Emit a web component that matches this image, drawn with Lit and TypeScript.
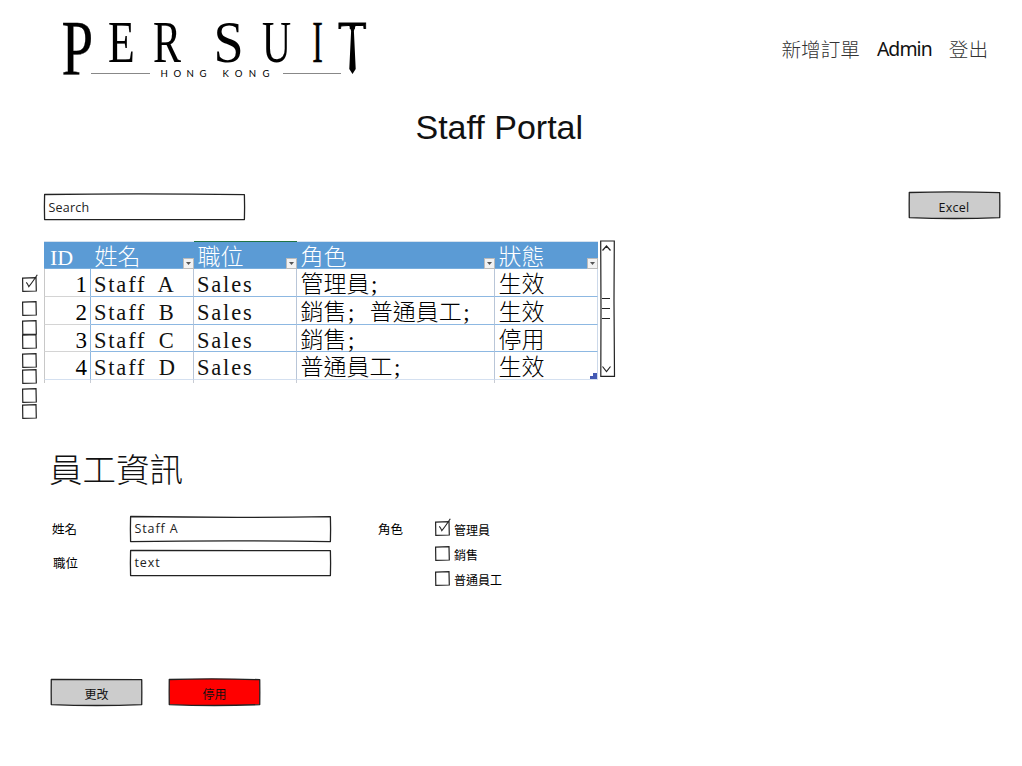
import { LitElement, html, svg, css, nothing } from "lit";
import { customElement, property } from "lit/decorators.js";

@customElement("sketch-box")
class SketchBox extends LitElement {
  @property() fill = "#fff";
  @property() shape = "top";
  static styles = css`
    :host { display: grid; grid-template-rows: minmax(0, 1fr); grid-template-columns: minmax(0, 1fr); }
    svg, .content { grid-area: 1 / 1; min-height: 0; }
    svg { display: block; width: 100%; height: 100%; overflow: visible; }
    .content { display: grid; align-items: center; z-index: 1; }
  `;
  render() {
    const top = this.shape === "top" || this.shape === "both" ? -1 : this.shape === "dip" ? 2 : 0.5;
    const bottom = this.shape === "both" || this.shape === "bottom" ? 27.4 : this.shape === "dip" ? 24.2 : 25.7;
    return html`
      <svg viewBox="0 0 100 26" preserveAspectRatio="none">
        <path d="M0.3 .5 Q50 ${top} 99.7 .7 L99.8 13 L99.7 25.6 Q50 ${bottom} .3 25.6 L.2 13 Z"
          fill=${this.fill} stroke="#222" stroke-width="1.3" stroke-linejoin="round" vector-effect="non-scaling-stroke"/>
      </svg>
      <div class="content"><slot></slot></div>`;
  }
}

@customElement("sketch-check")
class SketchCheck extends LitElement {
  @property({ type: Boolean }) checked = false;
  static styles = css`
    :host { display: block; width: 15px; height: 15px; }
    svg { display: block; overflow: visible; }
  `;
  render() {
    return html`<svg width="15" height="15" viewBox="0 0 15 15" fill="none" stroke="#222" stroke-width="1.2">
      <path d="M.6 1.2 L14 .7 L14.3 14 L.8 14.4 Z"/>
      ${this.checked ? svg`<path d="M4.3 5.3 Q5.8 7 6.8 9.6 Q9.5 6.5 15.3 -2.3" stroke-width="1.1"/>` : nothing}
    </svg>`;
  }
}

@customElement("app-root")
class AppRoot extends LitElement {
  static styles = css`
    :host {
      display: block; width: 1022px; height: 766px; overflow: hidden; background: #fff; color: #000;
      font-family: "Open Sans", "Noto Sans CJK TC", sans-serif;
    }
    * { box-sizing: border-box; }
    header { display: flex; justify-content: space-between; height: 94px; padding: 14px 34px 0 54px; }
    .logo { display: block; overflow: visible; }
    nav { display: flex; gap: 17px; padding-top: 20px; font-size: 19.6px; line-height: 30px; font-weight: 300; color: #333; font-family: "Noto Sans CJK TC", sans-serif; white-space: nowrap; }
    .user { font-family: "Noto Sans", sans-serif; font-weight: 400; color: #111; font-size: 19.4px; letter-spacing: -.9px; }
    h1 { margin: 0; padding-left: 415.5px; height: 100px; font: 400 34px/66px "Liberation Sans", sans-serif; color: #111; }
    .toolbar { display: flex; justify-content: space-between; padding: 0 22.5px 0 43.5px; height: 47px; }
    .field { width: 201px; height: 26px; font-size: 12.5px; color: #222; }
    .field span { padding-left: 5px; letter-spacing: .2px; }
    .button { width: 91px; height: 26px; text-align: center; font-size: 12.5px; color: #111; }
    .excel { margin-top: -2px; }
    .excel span { padding-top: 4px; letter-spacing: .3px; }
    .listing { display: flex; height: 205px; }
    .checks { display: grid; width: 44px; padding: 35.5px 0 0 21.5px; align-content: start; grid-template-rows: 24px 19px 14.5px 19px 16px 19px 15.5px 15px; }
    .table { display: grid; width: 554px; height: 142px; grid-template-columns: 47px 103px 103px 198px 103px; grid-template-rows: 28px 28px 28px 27px 28px 3px;
      font-family: "Liberation Serif", "Noto Sans CJK TC", serif; font-size: 23px; font-weight: 300; line-height: 32px; white-space: nowrap; }
    .th { display: flex; justify-content: space-between; line-height: 31px; background: #5b9bd5; color: #fff; padding-left: 3.5px; border-bottom: 1px solid #7aaedd; border-top: 1px solid #d6e2ee; }
    .th.picked { border-top-color: #217346; }
    .th.key { padding-left: 6px; }
    .th.key span { font-size: 22px; }
    .th i { width: 11px; height: 11px; margin-top: 16px; background: #f2f2f2; border: 1px solid #bbb; display: grid; place-items: center; }
    .th svg { display: block; }
    .td { border-right: 1px solid #b9c6d8; border-bottom: 1px solid #8db8e2; padding-left: 3.5px; }
    .half { display: inline-block; width: 11.6px; padding-left: 1.5px; }
    .latin { letter-spacing: 1.8px; word-spacing: 5px; padding-left: 3px; font-size: 22.5px; color: #111; }
    .id { text-align: right; padding-right: 3px; border-left: 1px solid #c8c8c8; border-bottom-color: #d4d4d4; border-right-color: #8db8e2; }
    .status { border-right-color: #ccd9ea; }
    .last { border-bottom-color: #d4e0f0; }
    .status.last { display: flex; justify-content: space-between; }
    .status.last svg { align-self: end; }
    .tail { border-right: 1px solid #c8ccd4; }
    .tail.first { border-left: 1px solid #c8c8c8; }
    .tail.end { border-right: 0; }
    .bar { display: block; margin-left: 2px; margin-top: -1px; }
    h2 { margin: 0; padding-left: 49px; height: 70px; font: 300 33.5px/44px "Noto Sans CJK TC", sans-serif; color: #111; }
    .form { display: flex; height: 163px; padding-left: 52px; font-size: 12.5px; }
    .labels { display: grid; grid-template-rows: 34px 34px; width: 77.5px; line-height: 27px; align-content: start; }
    .labels span + span { padding-left: 1px; }
    .inputs { display: grid; gap: 8px; width: 248.5px; align-content: start; }
    .inputs .wide span { letter-spacing: .9px; padding-bottom: 1px; }
    .roles { display: grid; grid-template-rows: 25px 25px 25px; align-content: start; padding-top: 4px; }
    .role-label { width: 57px; line-height: 28px; }
    .option { display: flex; gap: 4px; line-height: 20px; font-size: 12px; padding-top: 1px; }
    .actions { display: flex; gap: 27px; padding-left: 51px; }
    .actions span { padding-top: 3px; font-size: 12px; }
  `;

  private people = [
    ["1", "Staff A", "Sales", "管理員;", "生效"],
    ["2", "Staff B", "Sales", "銷售; 普通員工;", "生效"],
    ["3", "Staff C", "Sales", "銷售;", "停用"],
    ["4", "Staff D", "Sales", "普通員工;", "生效"],
  ];

  private logo() {
    const letters: [string, number, number, number, number, number][] = [
      ["P", 61.5, 74, 78, 0.73, 0.3], ["E", 108, 62, 60, 0.73, 0.1], ["R", 153, 62, 60, 0.7, 0.1],
      ["S", 213.5, 62, 59, 0.92, 0], ["U", 262, 62, 60, 0.67, 0.1], ["I", 312.3, 62, 60, 0.53, 0.6],
    ];
    return html`<svg class="logo" width="320" height="66" viewBox="54 14 320 66" font-family="Liberation Serif">
      ${letters.map(([c, x, y, size, k, w]) => svg`<text transform="translate(${x} ${y}) scale(${k} 1)" font-size=${size} stroke="#000" stroke-width=${w}>${c}</text>`)}
      <clipPath id="cap"><rect x="336" y="18" width="34" height="11"/></clipPath>
      <g clip-path="url(#cap)"><text transform="translate(338 62) scale(.78 1)" font-size="60" stroke="#000" stroke-width=".8">T</text></g>
      <path d="M348.5 23 h8 l-2.6 8 l1.8 38 l-3.2 5 l-3.2 -5 l1.8 -38 Z"/>
      <path d="M91 73.5 H150 M283 73.5 H341" stroke="#888" stroke-width="1"/>
      <text x="160.5" y="77" font-family="Lato" font-size="9.6" textLength="46" lengthAdjust="spacing">HONG</text>
      <text x="222.5" y="77" font-family="Lato" font-size="9.6" textLength="47" lengthAdjust="spacing">KONG</text>
    </svg>`;
  }

  private cell(v: string, i: number) {
    if (i !== 3) return v;
    return v.split(/(;)/).filter(Boolean).map((part) =>
      part === ";" ? html`<span class="half">;</span>` : part[0] === " " ? html`<span class="half"></span>${part.trim()}` : part);
  }

  render() {
    const heads = ["ID", "姓名", "職位", "角色", "狀態"];
    return html`
      <header>
        ${this.logo()}
        <nav><span>新增訂單</span><span class="user">Admin</span><span>登出</span></nav>
      </header>
      <h1>Staff Portal</h1>
      <div class="toolbar">
        <sketch-box class="field" shape="top"><span>Search</span></sketch-box>
        <sketch-box class="button excel" shape="both" fill="#ccc"><span>Excel</span></sketch-box>
      </div>
      <div class="listing">
        <div class="checks">
          ${[0, 1, 2, 3, 4, 5, 6, 7].map((i) => html`<sketch-check ?checked=${i === 0}></sketch-check>`)}
        </div>
        <div class="table">
          ${heads.map((h, i) => html`<div class="th ${i === 2 ? "picked" : i === 0 ? "key" : ""}"><span>${h}</span>
            ${i ? html`<i><svg width="5" height="3"><path d="M0 0h5L2.5 3Z" fill="#555"/></svg></i>` : nothing}</div>`)}
          ${this.people.map((p, r) => p.map((v, i) => html`<div class="td ${["id", "latin", "latin", "", "status"][i]} ${r === 3 ? "last" : ""}"><span>${this.cell(v, i)}</span>${
            r === 3 && i === 4 ? html`<svg width="7" height="6"><path d="M3 0h4v6H0V3h3Z" fill="#4359b3"/></svg>` : nothing}</div>`))}
          <div class="tail first"></div><div class="tail"></div><div class="tail"></div><div class="tail"></div><div class="tail end"></div>
        </div>
        <svg class="bar" width="16" height="138" viewBox="0 0 16 138" fill="none" stroke="#222" stroke-width="1.2">
          <path d="M.7 1 L14.3 1 L14 60 L14.5 136.3 L.8 136.3 L1 70 Z"/>
          <path d="M2.5 10.5 L6.5 6 L10.5 10.5 M2.5 126.5 L6.5 131.5 L10.5 126.5 M2 58.5 H10 M2 68.5 H10 M2 78.5 H10"/>
        </svg>
      </div>
      <h2>員工資訊</h2>
      <div class="form">
        <div class="labels"><span>姓名</span><span>職位</span></div>
        <div class="inputs">
          <sketch-box class="field wide" shape="dip"><span>Staff A</span></sketch-box>
          <sketch-box class="field wide" shape="flat"><span>text</span></sketch-box>
        </div>
        <div class="role-label">角色</div>
        <div class="roles">
          ${["管理員", "銷售", "普通員工"].map((r, i) => html`<div class="option"><sketch-check ?checked=${i === 0}></sketch-check><span>${r}</span></div>`)}
        </div>
      </div>
      <div class="actions">
        <sketch-box class="button" shape="bottom" fill="#ccc"><span>更改</span></sketch-box>
        <sketch-box class="button" shape="both" fill="#f00"><span>停用</span></sketch-box>
      </div>`;
  }
}
